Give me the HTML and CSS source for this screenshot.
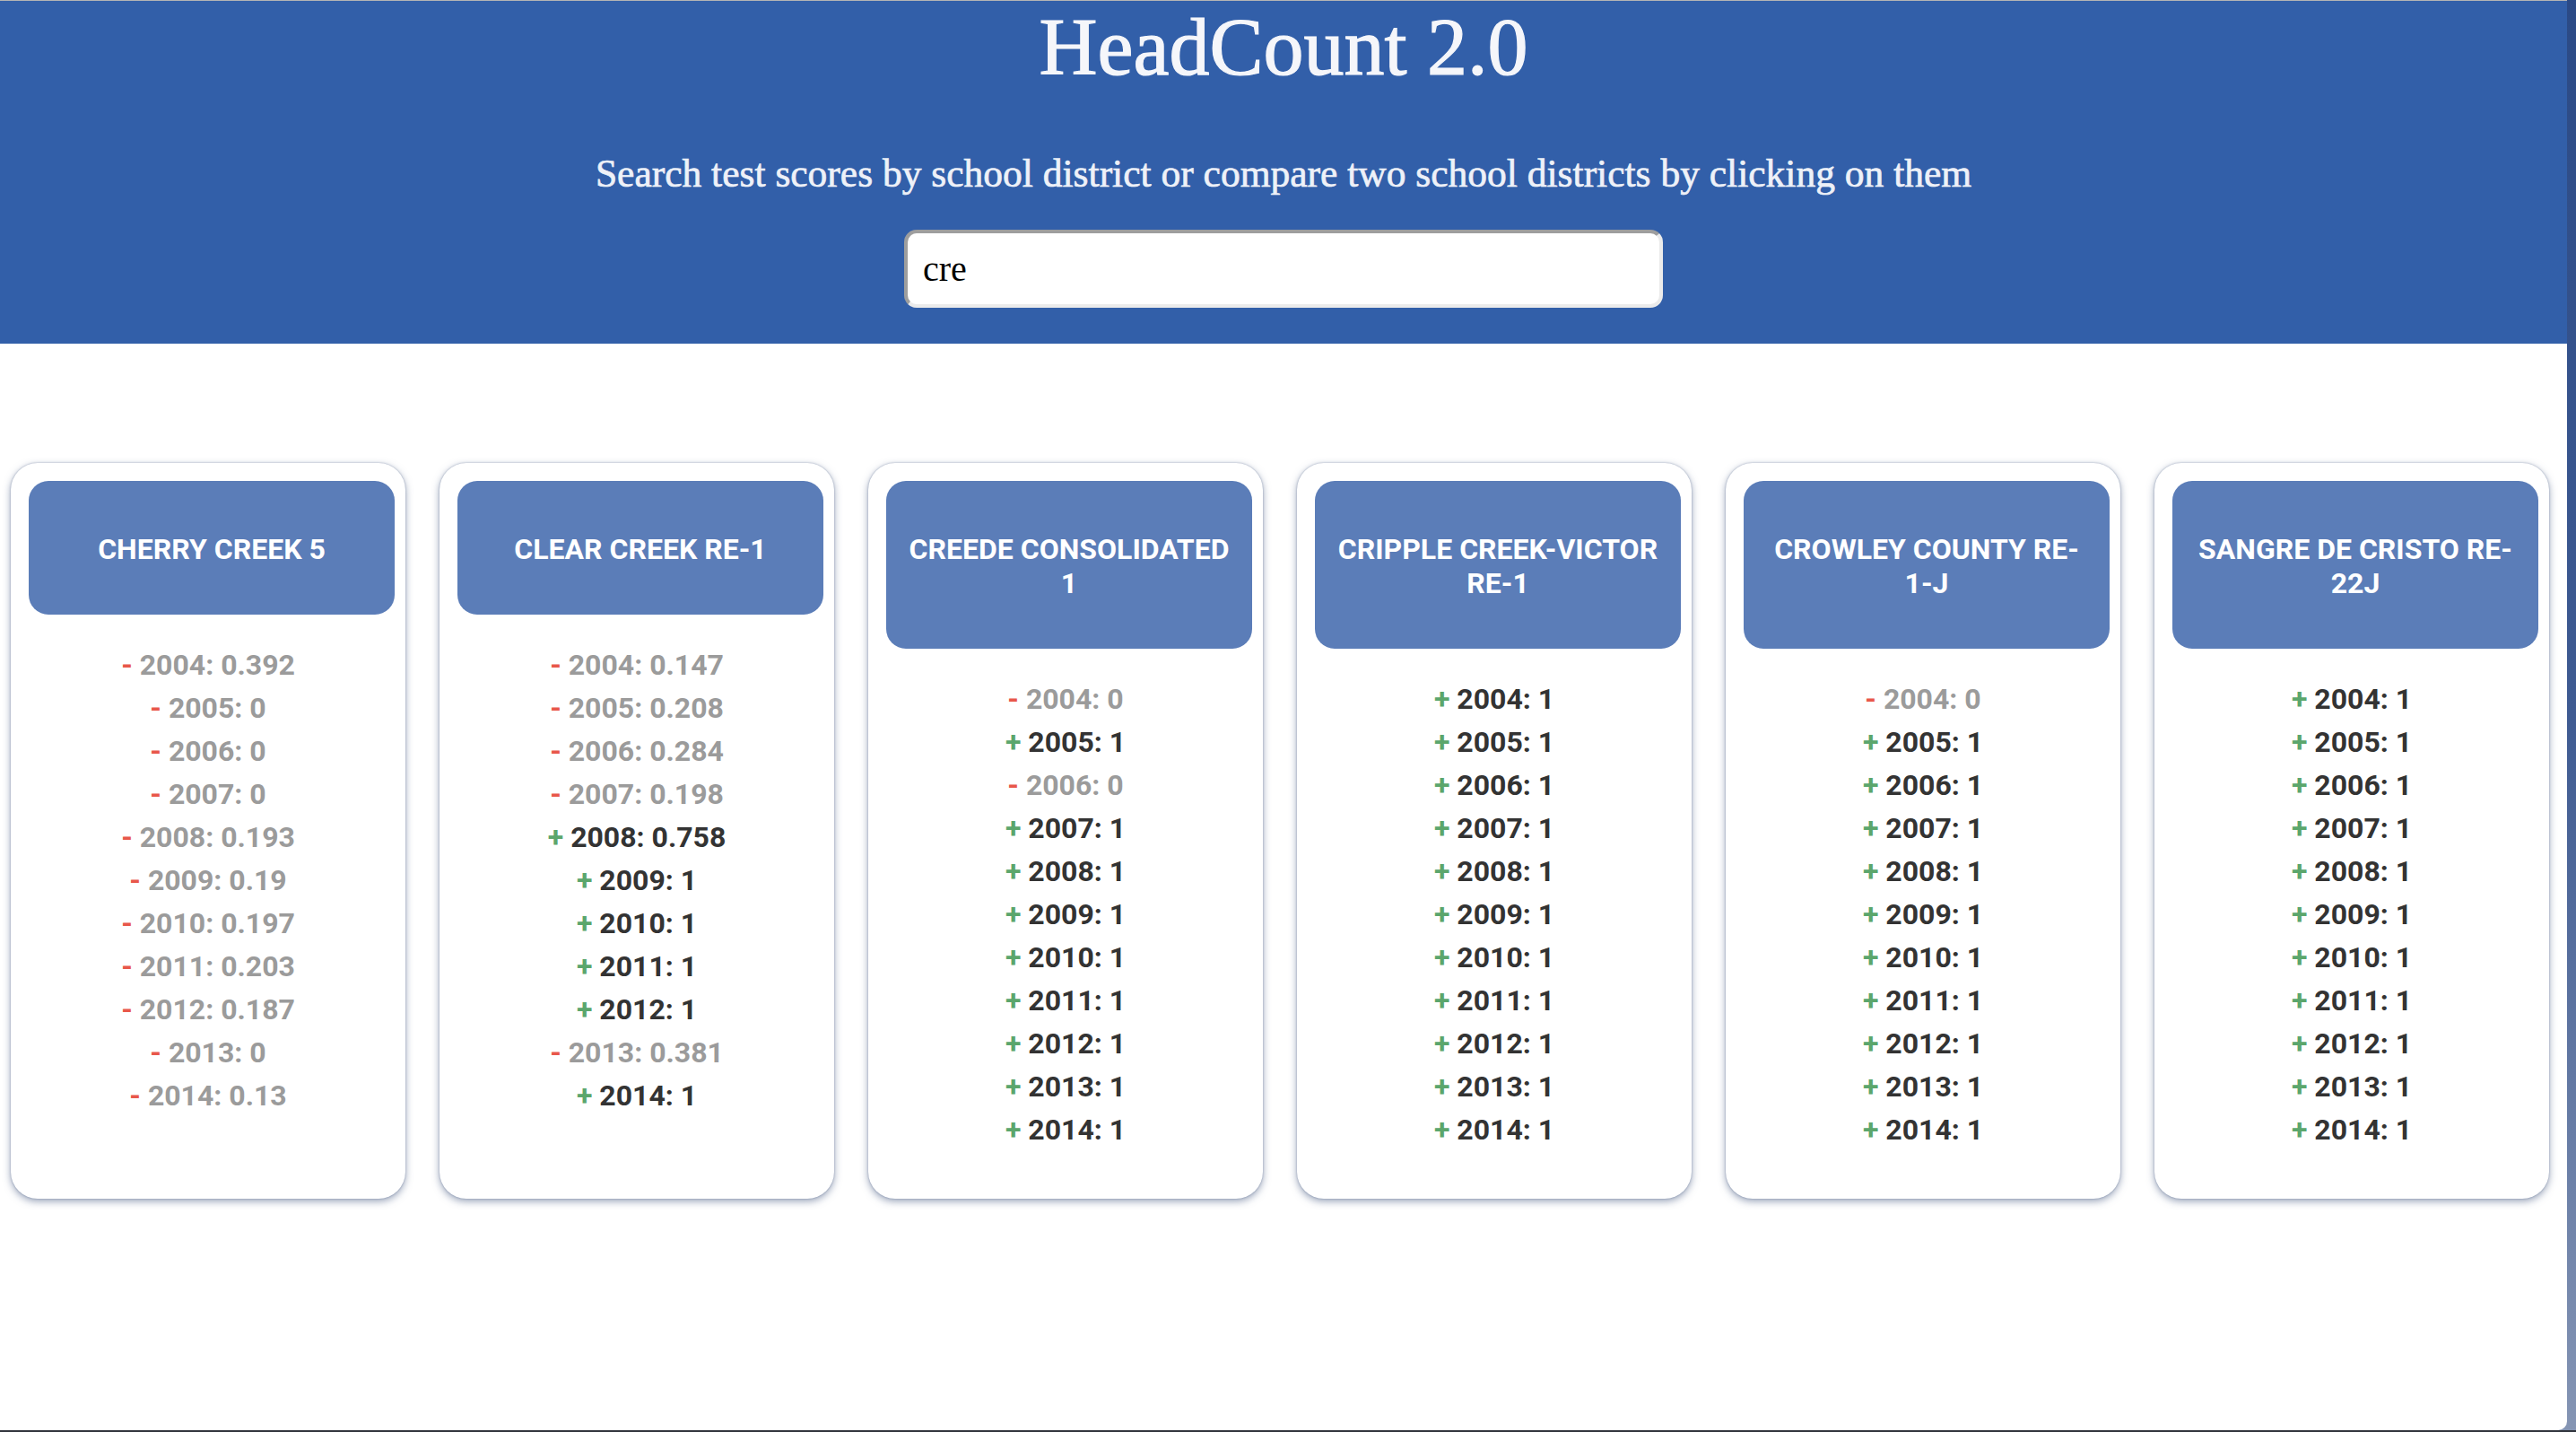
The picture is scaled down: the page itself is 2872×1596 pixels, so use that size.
FILE: index.html
```html
<!DOCTYPE html>
<html lang="en">
<head>
<meta charset="utf-8">
<title>HeadCount 2.0</title>
<link rel="stylesheet" href="styles.css">
</head>
<body>
<div class="window">
  <header class="hero">
    <h1 class="hero-title">HeadCount 2.0</h1>
    <p class="hero-sub">Search test scores by school district or compare two school districts by clicking on them</p>
    <input class="search" type="text" value="cre" autofocus>
  </header>

  <main class="cards">
    <section class="card">
      <h2 class="card-title">Cherry Creek 5</h2>
      <ul class="scores">
        <li class="neg"><span class="sign">-</span> 2004: 0.392</li>
        <li class="neg"><span class="sign">-</span> 2005: 0</li>
        <li class="neg"><span class="sign">-</span> 2006: 0</li>
        <li class="neg"><span class="sign">-</span> 2007: 0</li>
        <li class="neg"><span class="sign">-</span> 2008: 0.193</li>
        <li class="neg"><span class="sign">-</span> 2009: 0.19</li>
        <li class="neg"><span class="sign">-</span> 2010: 0.197</li>
        <li class="neg"><span class="sign">-</span> 2011: 0.203</li>
        <li class="neg"><span class="sign">-</span> 2012: 0.187</li>
        <li class="neg"><span class="sign">-</span> 2013: 0</li>
        <li class="neg"><span class="sign">-</span> 2014: 0.13</li>
      </ul>
    </section>

    <section class="card">
      <h2 class="card-title">Clear Creek RE-1</h2>
      <ul class="scores">
        <li class="neg"><span class="sign">-</span> 2004: 0.147</li>
        <li class="neg"><span class="sign">-</span> 2005: 0.208</li>
        <li class="neg"><span class="sign">-</span> 2006: 0.284</li>
        <li class="neg"><span class="sign">-</span> 2007: 0.198</li>
        <li class="pos"><span class="sign">+</span> 2008: 0.758</li>
        <li class="pos"><span class="sign">+</span> 2009: 1</li>
        <li class="pos"><span class="sign">+</span> 2010: 1</li>
        <li class="pos"><span class="sign">+</span> 2011: 1</li>
        <li class="pos"><span class="sign">+</span> 2012: 1</li>
        <li class="neg"><span class="sign">-</span> 2013: 0.381</li>
        <li class="pos"><span class="sign">+</span> 2014: 1</li>
      </ul>
    </section>

    <section class="card">
      <h2 class="card-title">Creede Consolidated 1</h2>
      <ul class="scores">
        <li class="neg"><span class="sign">-</span> 2004: 0</li>
        <li class="pos"><span class="sign">+</span> 2005: 1</li>
        <li class="neg"><span class="sign">-</span> 2006: 0</li>
        <li class="pos"><span class="sign">+</span> 2007: 1</li>
        <li class="pos"><span class="sign">+</span> 2008: 1</li>
        <li class="pos"><span class="sign">+</span> 2009: 1</li>
        <li class="pos"><span class="sign">+</span> 2010: 1</li>
        <li class="pos"><span class="sign">+</span> 2011: 1</li>
        <li class="pos"><span class="sign">+</span> 2012: 1</li>
        <li class="pos"><span class="sign">+</span> 2013: 1</li>
        <li class="pos"><span class="sign">+</span> 2014: 1</li>
      </ul>
    </section>

    <section class="card">
      <h2 class="card-title">Cripple Creek-Victor RE-1</h2>
      <ul class="scores">
        <li class="pos"><span class="sign">+</span> 2004: 1</li>
        <li class="pos"><span class="sign">+</span> 2005: 1</li>
        <li class="pos"><span class="sign">+</span> 2006: 1</li>
        <li class="pos"><span class="sign">+</span> 2007: 1</li>
        <li class="pos"><span class="sign">+</span> 2008: 1</li>
        <li class="pos"><span class="sign">+</span> 2009: 1</li>
        <li class="pos"><span class="sign">+</span> 2010: 1</li>
        <li class="pos"><span class="sign">+</span> 2011: 1</li>
        <li class="pos"><span class="sign">+</span> 2012: 1</li>
        <li class="pos"><span class="sign">+</span> 2013: 1</li>
        <li class="pos"><span class="sign">+</span> 2014: 1</li>
      </ul>
    </section>

    <section class="card">
      <h2 class="card-title">Crowley County RE-1-J</h2>
      <ul class="scores">
        <li class="neg"><span class="sign">-</span> 2004: 0</li>
        <li class="pos"><span class="sign">+</span> 2005: 1</li>
        <li class="pos"><span class="sign">+</span> 2006: 1</li>
        <li class="pos"><span class="sign">+</span> 2007: 1</li>
        <li class="pos"><span class="sign">+</span> 2008: 1</li>
        <li class="pos"><span class="sign">+</span> 2009: 1</li>
        <li class="pos"><span class="sign">+</span> 2010: 1</li>
        <li class="pos"><span class="sign">+</span> 2011: 1</li>
        <li class="pos"><span class="sign">+</span> 2012: 1</li>
        <li class="pos"><span class="sign">+</span> 2013: 1</li>
        <li class="pos"><span class="sign">+</span> 2014: 1</li>
      </ul>
    </section>

    <section class="card">
      <h2 class="card-title">Sangre De Cristo RE-22J</h2>
      <ul class="scores">
        <li class="pos"><span class="sign">+</span> 2004: 1</li>
        <li class="pos"><span class="sign">+</span> 2005: 1</li>
        <li class="pos"><span class="sign">+</span> 2006: 1</li>
        <li class="pos"><span class="sign">+</span> 2007: 1</li>
        <li class="pos"><span class="sign">+</span> 2008: 1</li>
        <li class="pos"><span class="sign">+</span> 2009: 1</li>
        <li class="pos"><span class="sign">+</span> 2010: 1</li>
        <li class="pos"><span class="sign">+</span> 2011: 1</li>
        <li class="pos"><span class="sign">+</span> 2012: 1</li>
        <li class="pos"><span class="sign">+</span> 2013: 1</li>
        <li class="pos"><span class="sign">+</span> 2014: 1</li>
      </ul>
    </section>
  </main>
</div>
</body>
</html>
```

FILE: styles.css
```css
html, body {
  margin: 0;
  padding: 0;
}

body {
  height: 1596px;
  overflow: hidden;
  background:
    linear-gradient(to top, #30343c 0, #30343c 2px, transparent 2px),
    linear-gradient(to bottom, #2b4a86 0%, #3f5b92 50%, #8595b4 100%);
}

.window {
  box-sizing: border-box;
  height: 1594px;
  margin-right: 10px;
  background: #ffffff;
  border-top: 1px solid #b4b4b4;
  border-bottom-right-radius: 10px;
  overflow: hidden;
}

.hero {
  background: #325fa9;
  text-align: center;
  padding: 0 0 40px;
}

.hero-title {
  margin: 0;
  font-family: "Liberation Serif", "Times New Roman", serif;
  font-weight: 400;
  font-size: 90px;
  line-height: 103px;
  color: #f5f6fa;
  -webkit-text-stroke: 1.2px #f5f6fa;
}

.hero-sub {
  margin: 64px 0 0;
  font-family: "Liberation Serif", "Times New Roman", serif;
  font-weight: 400;
  font-size: 43.5px;
  line-height: 50px;
  color: #eef1f8;
  -webkit-text-stroke: 0.7px #eef1f8;
}

.search {
  display: block;
  box-sizing: border-box;
  width: 846px;
  height: 87px;
  margin: 38px auto 0;
  padding: 0 17px;
  border-style: solid;
  border-width: 4px;
  border-color: #9e9e9e #ebebeb #ebebeb #9e9e9e;
  border-radius: 14px;
  background: #ffffff;
  font-family: "Liberation Serif", "Times New Roman", serif;
  font-size: 40px;
  color: #000000;
  caret-color: #000000;
  outline: none;
}

.cards {
  display: flex;
  align-items: stretch;
  gap: 38px;
  margin-top: 133px;
  padding-left: 12px;
}

.card {
  box-sizing: border-box;
  width: 440px;
  flex: 0 0 440px;
  padding: 20px 0 53px;
  background: #ffffff;
  border-radius: 30px;
  box-shadow: 0 3px 8px rgba(70, 90, 130, 0.55), 0 0 2px rgba(70, 90, 130, 0.5);
}

.card-title {
  margin: 0 12px 0 20px;
  padding: 57px 24px 54px;
  background: #5b7db8;
  border-radius: 22px;
  color: #ffffff;
  font-family: Roboto, "Liberation Sans", sans-serif;
  font-weight: 700;
  font-size: 32px;
  line-height: 38px;
  text-align: center;
  text-transform: uppercase;
}

.scores {
  list-style: none;
  margin: 32px 0 0;
  padding: 0;
  text-align: center;
  font-family: Roboto, "Liberation Sans", sans-serif;
  font-weight: 700;
  font-size: 32px;
  line-height: 48px;
}

.scores .neg {
  color: #9b9b9b;
}

.scores .pos {
  color: #333333;
}

.neg .sign {
  color: #e8574a;
}

.pos .sign {
  color: #5ba66c;
}
```
